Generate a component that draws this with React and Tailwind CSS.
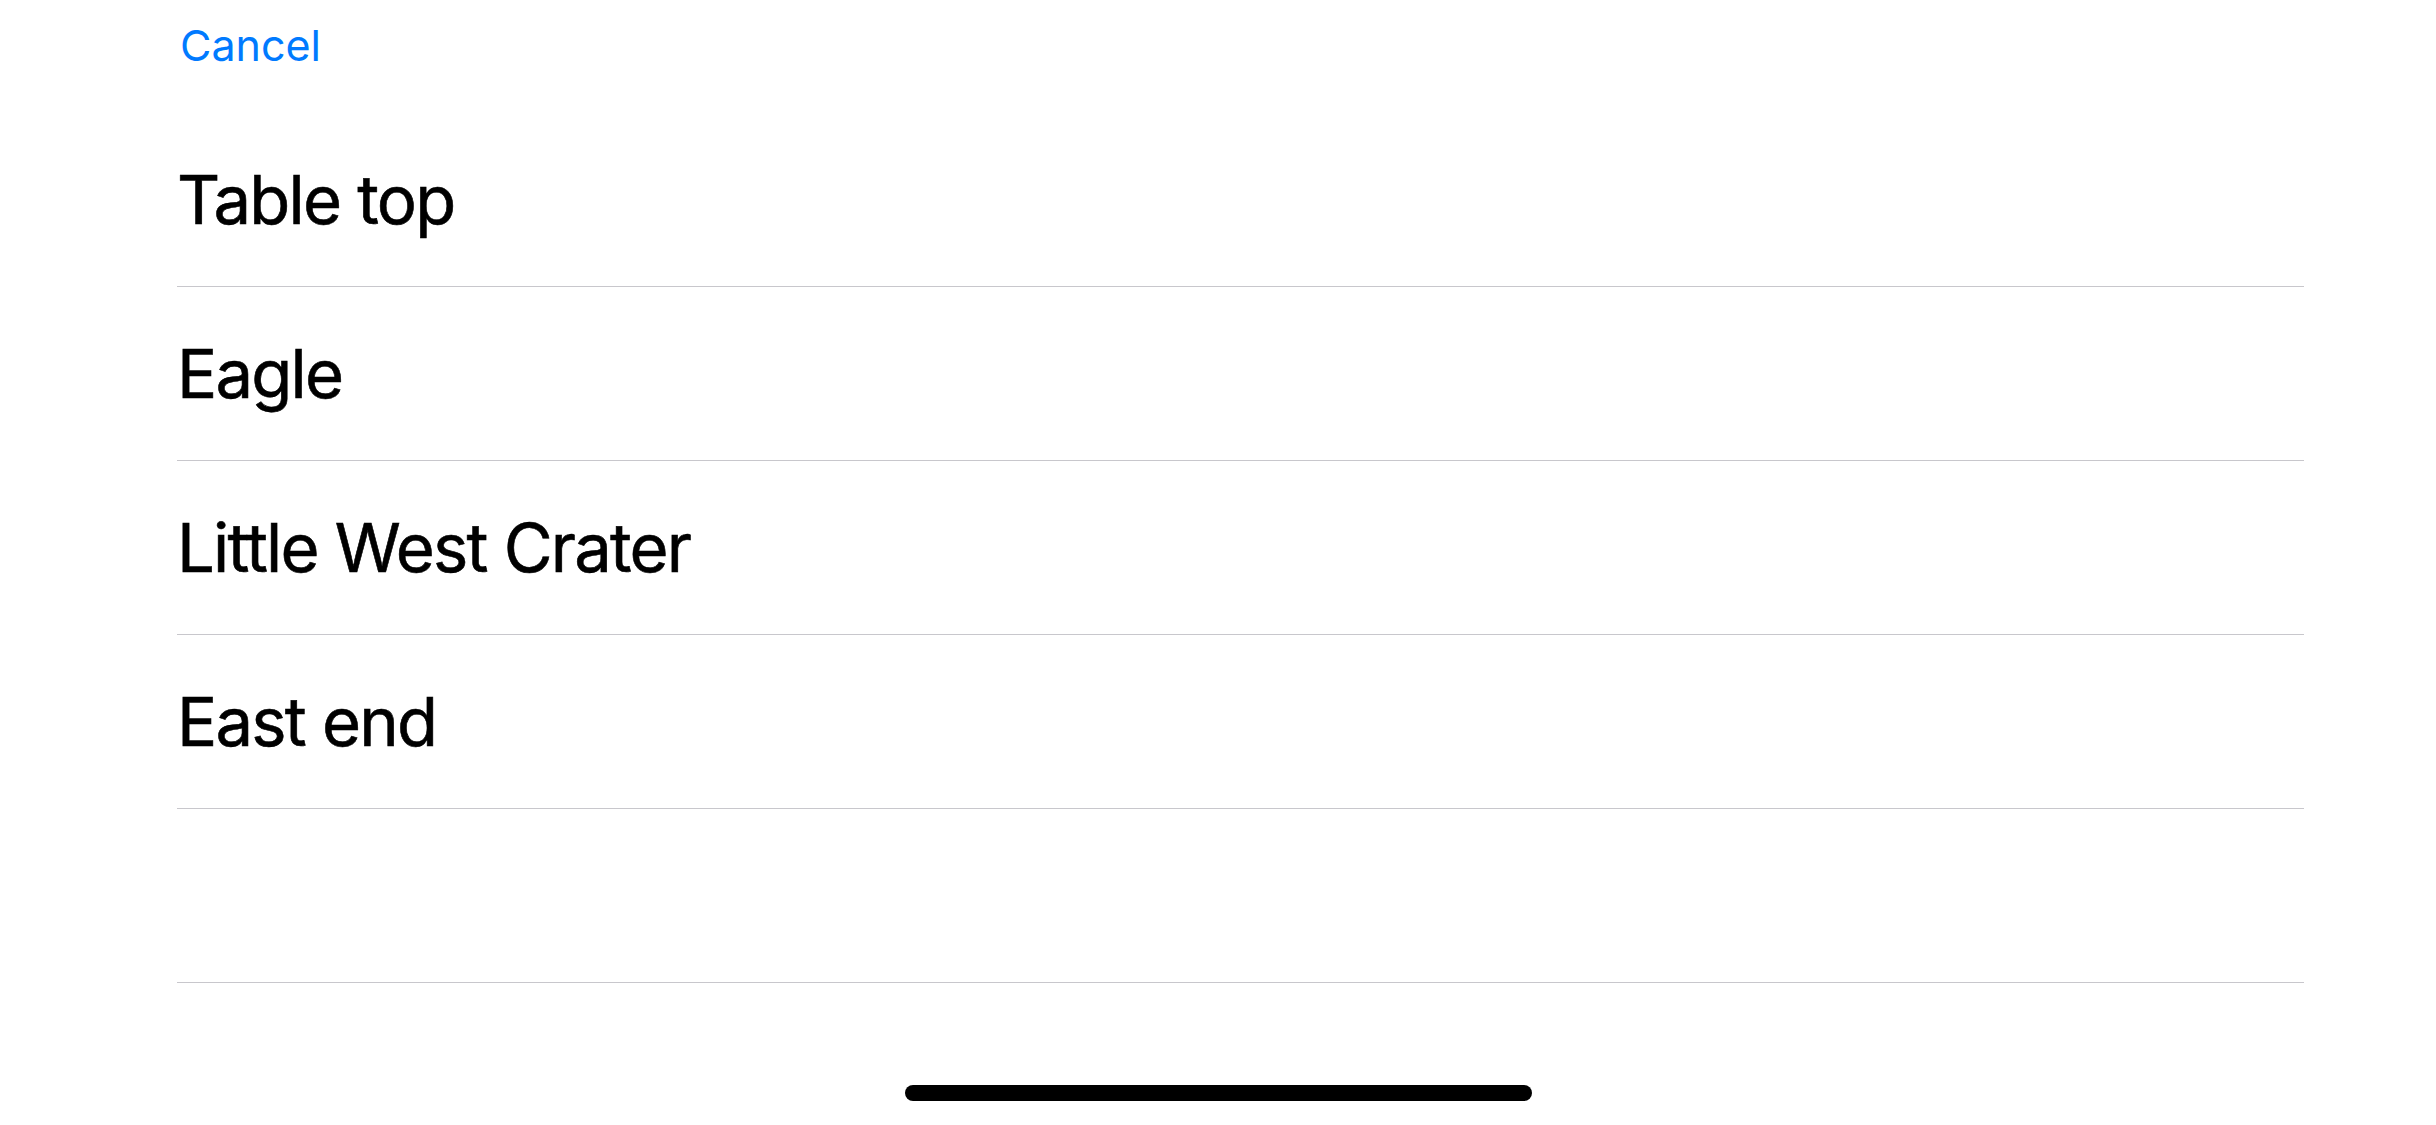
export default function App() {
  const rows = ["Table top", "Eagle", "Little West Crater", "East end", ""];
  return (
    <div className="relative w-[2436px] h-[1125px] bg-white overflow-hidden" style={{ fontFamily: "Inter, 'Noto Sans', sans-serif" }}>
      <div className="h-[113px] pl-[180px] pt-[24px]">
        <span className="text-[43px] leading-[43px] text-[#007aff]">Cancel</span>
      </div>
      <div className="pl-[177px] pr-[132px]">
        {rows.map((r, i) => (
          <div key={i} className="h-[174px] border-b border-[#c8c7cc] flex items-center">
            <span className="text-[67px] leading-[67px] text-black tracking-[-1.8px] [-webkit-text-stroke:0.6px_black]">{r}</span>
          </div>
        ))}
      </div>
      <div className="absolute left-[905px] top-[1085px] w-[627px] h-[16px] rounded-full bg-black" />
    </div>
  );
}
